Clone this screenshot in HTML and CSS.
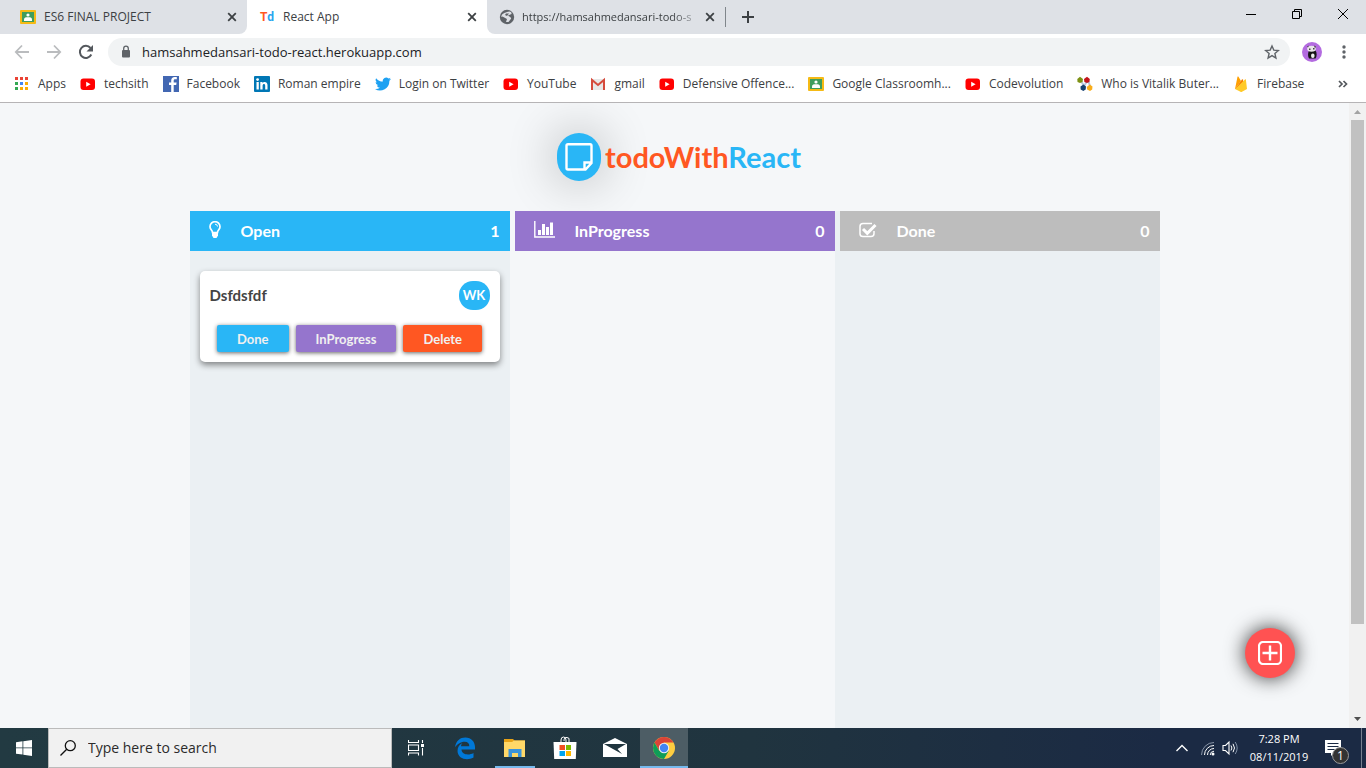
FILE: index.html
```html
<!DOCTYPE html>
<html lang="en">
<head>
<meta charset="utf-8">
<title>React App</title>
<link rel="stylesheet" href="styles.css">
</head>
<body>
<svg class="defs" aria-hidden="true">
  <symbol id="youtube" viewBox="0 0 16 16"><rect x=".5" y="2.500" width="14.500" height="11.500" rx="3" fill="#f00"/><path d="M6.200 5.800v5L10.600 8.300z" fill="#fff"/></symbol>
  <symbol id="classroom" viewBox="0 0 16 16"><rect y="1" width="16" height="14" rx="1" fill="#f5ba15"/><rect x="2" y="3" width="12" height="10" fill="#3f9d5d"/><circle cx="8" cy="6" r="1.600" fill="#fff"/><path d="M4 12v-1.500C4 8.500 6 8.300 8 8.300s4 .2 4 2.200V12z" fill="#fff"/></symbol>
  <symbol id="close" viewBox="0 0 10 10"><path d="M1.200 1.200l7.600 7.600M8.800 1.200L1.200 8.800" stroke="#3c4043" stroke-width="1.800"/></symbol>
</svg>

<header class="browser">
  <div class="tabstrip">
    <div class="tab">
      <svg class="icon"><use href="#classroom"/></svg>
      <span class="tab-title">ES6 FINAL PROJECT</span>
      <button class="tab-close" aria-label="Close tab"><svg><use href="#close"/></svg></button>
    </div>
    <div class="tab tab-active">
      <span class="td-icon"><b>T</b><b>d</b></span>
      <span class="tab-title">React App</span>
      <button class="tab-close" aria-label="Close tab"><svg><use href="#close"/></svg></button>
    </div>
    <div class="tab">
      <svg class="icon" viewBox="0 0 16 16"><circle cx="8" cy="8" r="7.200" fill="#5f6368"/><path d="M8 3c3-1.500 5 0 4.500 2L9 6.500c1 1 2.500 1 3.200 3L9.500 13H7l1-3-4.500-2.500L2.300 8C2.500 5 5 4 8 3z" fill="#dee1e6"/><path d="M7 4.500h3L8 7 6 6z" fill="#5f6368"/></svg>
      <span class="tab-title tab-fade">https://hamsahmedansari-todo-s</span>
      <button class="tab-close" aria-label="Close tab"><svg><use href="#close"/></svg></button>
    </div>
    <span class="tab-rule"></span>
    <button class="new-tab" aria-label="New tab"><svg viewBox="0 0 12 12"><path d="M6 0v12M0 6h12" stroke="#3c4043" stroke-width="2"/></svg></button>
    <div class="window-controls">
      <button aria-label="Minimize"><svg viewBox="0 0 10 10"><path d="M0 5.500h10" stroke="#000"/></svg></button>
      <button aria-label="Restore"><svg viewBox="0 0 10 10"><path d="M.5 2.500h7v7h-7zM2.500 2.500v-2h7v7h-2" fill="none" stroke="#000"/></svg></button>
      <button aria-label="Close"><svg viewBox="0 0 10 10"><path d="M0 0l10 10M10 0L0 10" stroke="#000"/></svg></button>
    </div>
  </div>

  <div class="toolbar">
    <button aria-label="Back"><svg class="icon" viewBox="0 0 16 16"><path d="M15 8H2M8 1.500L1.800 8 8 14.500" fill="none" stroke="#babcbe" stroke-width="1.800"/></svg></button>
    <button aria-label="Forward"><svg class="icon" viewBox="0 0 16 16"><path d="M1 8h13M8 1.500L14.200 8 8 14.500" fill="none" stroke="#babcbe" stroke-width="1.800"/></svg></button>
    <button aria-label="Reload"><svg class="icon" viewBox="0 0 16 16"><path d="M13.300 10.500A6 6 0 1 1 12.500 4" fill="none" stroke="#54585d" stroke-width="2"/><path d="M15 1v6.500H8.500z" fill="#54585d"/></svg></button>
    <div class="omnibox">
      <svg class="lock" viewBox="0 0 10 14"><rect x="1" y="5" width="8" height="7.500" rx="1" fill="#5f6368"/><path d="M2.700 5.500V3.400a2.300 2.300 0 0 1 4.600 0v2.100" fill="none" stroke="#5f6368" stroke-width="1.300"/></svg>
      <input class="url" aria-label="Address" value="hamsahmedansari-todo-react.herokuapp.com">
      <button aria-label="Bookmark this page"><svg class="icon" viewBox="0 0 16 16"><path d="M8 2l1.800 4.100 4.600.4-3.500 3 1 4.500L8 11.600 4.100 14l1-4.500-3.500-3 4.600-.4z" fill="none" stroke="#5f6368" stroke-width="1.400"/></svg></button>
    </div>
    <button class="avatar" aria-label="Profile"><svg viewBox="0 0 20 20"><circle cx="10" cy="10" r="10" fill="#b36be0"/><path d="M7 8.500c-1.500 3-1 6.500 0 8h6.500c1.500-2 1.500-6 0-8z" fill="#151515"/><ellipse cx="10.800" cy="13.800" rx="1.800" ry="2.300" fill="#eee"/><ellipse cx="9.500" cy="6.800" rx="4.400" ry="3" fill="#e9e5ea"/><path d="M5 4.500l2-1-1 2zM12 3.500l2 1-1 2zM7 6.500h1.500V8H7zM11 6h1.500v1.500H11z" fill="#444"/></svg></button>
    <button aria-label="Menu"><svg class="icon" viewBox="0 0 16 16"><g fill="#5f6368"><circle cx="8" cy="3" r="1.700"/><circle cx="8" cy="8" r="1.700"/><circle cx="8" cy="13" r="1.700"/></g></svg></button>
  </div>

  <nav class="bookmarks" aria-label="Bookmarks">
    <a href="#"><svg class="icon" viewBox="0 0 16 16"><path d="M1 1h3v3H1zM6 1h3v3H6zM11 1h3v3h-3z" fill="#ea4335"/><path d="M1 6h3v3H1zM1 11h3v3H1z" fill="#34a853"/><path d="M6 6h3v3H6z" fill="#4285f4"/><path d="M11 6h3v3h-3zM6 11h3v3H6zM11 11h3v3h-3z" fill="#fbac05"/></svg>Apps</a>
    <a href="#"><svg class="icon"><use href="#youtube"/></svg>techsith</a>
    <a href="#"><svg class="icon" viewBox="0 0 16 16"><path d="M0 0h16v16H0z" fill="#4267b2"/><path d="M13.800 3.200h-1.600c-1.200 0-1.500.6-1.500 1.500V6.500h2.900l-.4 2.400h-2.500V16H8.200V8.900H6V6.500h2.200V4.400C8.200 2.100 9.600.9 11.700.9c1 0 1.800.1 2.100.1z" fill="#fff"/></svg>Facebook</a>
    <a href="#"><svg class="icon" viewBox="0 0 16 16"><rect width="16" height="16" rx="1" fill="#0077b5"/><path d="M2.500 6h2.300v7.500H2.500zM6.300 6h2.200v1c1-1.600 5-1.800 5 2v4.500h-2.300V9.800c0-2.600-2.600-2.300-2.600 0v3.700H6.300z" fill="#fff"/><circle cx="3.600" cy="3.600" r="1.400" fill="#fff"/></svg>Roman empire</a>
    <a href="#"><svg class="icon" viewBox="0 0 24 24"><path d="M24 4.600a10 10 0 0 1-2.800.8 5 5 0 0 0 2.100-2.700 10 10 0 0 1-3.100 1.200 4.900 4.900 0 0 0-8.400 4.500A14 14 0 0 1 1.700 3.200a4.900 4.900 0 0 0 1.500 6.500 5 5 0 0 1-2.200-.6 4.900 4.900 0 0 0 3.900 4.900 5 5 0 0 1-2.200.1 4.900 4.900 0 0 0 4.600 3.400A10 10 0 0 1 0 19.500a14 14 0 0 0 21.500-12.400c1-.7 1.800-1.600 2.500-2.500z" fill="#1da1f2"/></svg>Login on Twitter</a>
    <a href="#"><svg class="icon"><use href="#youtube"/></svg>YouTube</a>
    <a href="#"><svg class="icon" viewBox="0 0 16 16"><path d="M1 3h14v11H1z" fill="#e7e7e7"/><path d="M2 14V4l6 5 6-5v10" fill="none" stroke="#d54b3d" stroke-width="2"/></svg>gmail</a>
    <a href="#"><svg class="icon"><use href="#youtube"/></svg>Defensive Offence...</a>
    <a href="#"><svg class="icon"><use href="#classroom"/></svg>Google Classroomh...</a>
    <a href="#"><svg class="icon"><use href="#youtube"/></svg>Codevolution</a>
    <a href="#"><svg class="icon" viewBox="0 0 16 16"><path d="M4 5l3 5 4-6 2 6" stroke="#b9c7dd" stroke-width="2" fill="none"/><path d="M.3 3L3 .8 6 3 5.500 6 3 7 .5 6z" fill="#7d9114"/><path d="M7 3l3-2.200L12.800 3l-.4 3L10 7 7.400 6z" fill="#c3141b"/><path d="M3.500 10.500l3-2 2.500 2-.3 3L6.300 15 3.700 13.500z" fill="#174272"/><path d="M9.800 11l3-2.500 2.700 2-.3 3L13 15l-2.800-1.500z" fill="#f9ad1b"/></svg>Who is Vitalik Buter...</a>
    <a href="#"><svg class="icon" viewBox="0 0 16 16"><path d="M2 13L4.500.8c.2-.6.8-.5 1 0L8 5z" fill="#ffa000"/><path d="M2 13l7-9.500c.3-.4.700-.4.900 0L12 13z" fill="#f57c00"/><path d="M2 13L12 3.500c.4-.4.800-.3.900.2L14 13l-5 2.800c-.6.300-1 .3-1.500 0z" fill="#ffca28"/></svg>Firebase</a>
    <button class="more" aria-label="More bookmarks"><svg viewBox="0 0 10 8"><path d="M1 1l3 3-3 3M5.500 1l3 3-3 3" fill="none" stroke="#54585d" stroke-width="1.700"/></svg></button>
  </nav>
</header>

<div class="viewport">
  <main class="app">
    <h1 class="brand">
      <span class="brand-mark"><svg viewBox="0 0 28 28"><path d="M3 1.200h22q1.500 0 1.500 1.500V20l-6 6.500H3q-1.500 0-1.500-1.500V2.700q0-1.500 1.500-1.500zM26 19.500h-6.500V26" fill="none" stroke="#fff" stroke-width="2.400"/></svg></span>
      <span class="brand-name"><span class="orange">todoWith</span><span class="blue">React</span></span>
    </h1>
    <div class="board">
      <section class="column tinted">
        <h2 class="column-head open"><svg class="bulb" viewBox="0 0 12 18"><path d="M3.500 11.500C3.500 9.500 1 8.500 1 5.700a5 5 0 0 1 10 0c0 2.800-2.500 3.800-2.500 5.800z" fill="none" stroke="#fff" stroke-width="1.700"/><path d="M6 3.200q2.300 0 2.500 2.300" fill="none" stroke="#fff"/><path d="M3 11h6v3.500L7.500 17h-3L3 14.500z" fill="#fff"/></svg><span>Open</span><span class="count">1</span></h2>
        <article class="card">
          <div class="card-top"><h3>Dsfdsfdf</h3><span class="badge">WK</span></div>
          <div class="actions"><button class="open">Done</button><button class="progress">InProgress</button><button class="delete">Delete</button></div>
        </article>
      </section>
      <section class="column wide">
        <h2 class="column-head progress"><svg class="chart" viewBox="0 0 21 17"><path d="M.8 0v16h20.200" fill="none" stroke="#fff" stroke-width="1.400"/><path d="M4 9h3v5H4zM8 3h3v11H8zM12 6h3v8h-3zM16 1.500h3V14h-3z" fill="#fff"/></svg><span>InProgress</span><span class="count">0</span></h2>
      </section>
      <section class="column wide tinted">
        <h2 class="column-head done"><svg class="check" viewBox="0 0 18 16"><path d="M13 1.500H4Q1 1.500 1 4.500v7.200q0 2.800 3 2.800h8q3 0 3-3V9" fill="none" stroke="#fff" stroke-width="1.500"/><path d="M4 7l4.300 4.300L16.500 3" fill="none" stroke="#fff" stroke-width="3"/></svg><span>Done</span><span class="count">0</span></h2>
      </section>
    </div>
    <button class="fab" aria-label="Add todo"><svg viewBox="0 0 24 24"><rect x="1" y="1" width="22" height="22" rx="4" fill="none" stroke="#fff" stroke-width="2.200"/><path d="M12 4.500v15M4.500 12h15" stroke="#fff" stroke-width="2.400"/></svg></button>
  </main>
  <div class="scrollbar" aria-hidden="true">
    <svg viewBox="0 0 17 17"><path d="M5 11l3.500-4L12 11z" fill="#a3a3a3"/></svg>
    <div class="scroll-track"><div class="scroll-thumb"></div></div>
    <svg viewBox="0 0 17 17"><path d="M5 6l3.500 4L12 6z" fill="#505050"/></svg>
  </div>
</div>

<footer class="taskbar">
  <button class="task start" aria-label="Start"><svg class="win" viewBox="0 0 16 16"><path d="M0 2.200l6.500-.9v6.200H0zM7.300 1.200L16 0v7.500H7.300zM0 8.300h6.500v6.300L0 13.800zM7.300 8.300H16V16l-8.700-1.300z" fill="#fff"/></svg></button>
  <label class="search"><svg class="icon" viewBox="0 0 16 16"><circle cx="10.300" cy="5.700" r="5" fill="none" stroke="#111" stroke-width="1.300"/><path d="M6.700 9.300L.5 15.500" stroke="#111" stroke-width="1.300"/></svg><input aria-label="Search" placeholder="Type here to search"></label>
  <button class="task view" aria-label="Task view"><svg class="icon" viewBox="0 0 16 16"><path d="M.5 0v2.500h10V0M.5 15.500V13h10v2.500M.5 5h10v5.500H.5zM14.500 0v3M14.500 8v7.500" fill="none" stroke="#fff" stroke-width="1.100"/><path d="M13 4h3v3h-3z" fill="#fff"/></svg></button>
  <button class="task" aria-label="Edge"><svg class="app-icon" viewBox="0 0 24 24"><path d="M2 11.200C3 4.700 7.200 1.500 12.300 1.500 18.500 1.500 22 6 22 11v2.600H8.500c.2 5.500 7.800 6 12 3.400v4.600C14 25 4.800 23 4.500 15c0-4 2-6.500 5-8-1 1-1.400 2.200-1.500 3.300h8.300c0-3-1.500-4.500-4.500-4.500C7.500 5.800 4 8.500 2 11.200z" fill="#0078d7"/></svg></button>
  <button class="task running" aria-label="File Explorer"><svg class="app-icon" viewBox="0 0 24 24"><path d="M1 3h9l1.500 1.500H22V21H1z" fill="#e8a317"/><path d="M1 6h8l2-1.500h11V21H1z" fill="#ffd868"/><path d="M5.500 13h13v8H15v-4H9v4H5.500z" fill="#3b94dc"/></svg></button>
  <button class="task" aria-label="Store"><svg class="app-icon" viewBox="0 0 24 24"><path d="M8 7V4q0-3 2.500-3T13 4v2M11 5q0-4 3-3.500T16 4v3" fill="none" stroke="#fff"/><path d="M.5 6h23L22.800 23H1.200z" fill="#fff"/><path d="M6.500 9H12v5H6.500z" fill="#f25022"/><path d="M13 9h5v5h-5z" fill="#7fba00"/><path d="M6.500 15H12v5H6.500z" fill="#00a4ef"/><path d="M13 15h5v5h-5z" fill="#ffb900"/></svg></button>
  <button class="task" aria-label="Mail"><svg class="app-icon" viewBox="0 0 24 24"><path d="M0 8l12-6 12 6v13H0z" fill="#fff"/><path d="M1 8h22l-8.500 5L19 18z" fill="#20353e"/></svg></button>
  <button class="task current" aria-label="Chrome"><svg class="app-icon" viewBox="0 0 24 24"><circle cx="12" cy="12" r="11" fill="#ffcd40"/><path d="M2.500 6.500A11 11 0 0 1 21.500 6.500H12L7.300 14.700z" fill="#db4437"/><path d="M2.500 6.500A11 11 0 0 0 12 23L16.800 14.700H7.200z" fill="#0f9d58"/><circle cx="12" cy="12" r="5.200" fill="#f1f1f1"/><circle cx="12" cy="12" r="4.200" fill="#4285f4"/></svg></button>
  <div class="tray">
    <svg class="chevron" viewBox="0 0 12 12"><path d="M.5 9L6 3.500 11.500 9" fill="none" stroke="#fff" stroke-width="1.400"/></svg>
    <svg class="icon" viewBox="0 0 16 16"><g fill="none" stroke="#8793a6"><path d="M1.500 15A12.500 12.500 0 0 1 14 2.500"/><path d="M4.500 15A9.500 9.500 0 0 1 14 5.500" stroke="#fff"/><path d="M7.500 15A6.500 6.500 0 0 1 14 8.500M10.200 15A4 4 0 0 1 14 11.200" stroke="#fff"/></g><circle cx="13" cy="14" r="1.500" fill="#fff"/></svg>
    <svg class="icon" viewBox="0 0 16 16"><path d="M1 5.500h2.500L7 2v12l-3.500-3.500H1z" fill="none" stroke="#fff" stroke-width="1.100"/><path d="M9 5.500q1.800 2.500 0 5M11 3.800q3 4.200 0 8.400" fill="none" stroke="#fff"/><path d="M13.200 2q4 6 0 12" fill="none" stroke="#8190a6"/></svg>
    <div class="clock"><span>7:28 PM</span><span>08/11/2019</span></div>
    <button class="notify" aria-label="Notifications"><svg viewBox="0 0 16 16"><path d="M0 0h16v13H9l-3 3v-3H0z" fill="#fff"/><path d="M2.500 3.500h11M2.500 6.500h11M2.500 9.500h7" stroke="#1b2a44"/></svg><span>1</span></button>
  </div>
</footer>
</body>
</html>
```
FILE: styles.css
```css
* { box-sizing: border-box; }

body {
  margin: 0;
  height: 100vh;
  display: flex;
  flex-direction: column;
  overflow: hidden;
  font: 12px/16px "Open Sans", "Noto Sans", sans-serif;
  color: #3c4043;
}

button, input { font: inherit; color: inherit; border: 0; padding: 0; background: none; }
button { display: flex; align-items: center; justify-content: center; }
h1, h2, h3 { margin: 0; }
svg { display: block; flex: none; }
.defs { display: none; }
.icon { width: 16px; height: 16px; flex: none; }

/* Browser chrome */
.browser { flex: none; background: #fff; border-bottom: 1px solid #b6b4b6; }
.tabstrip { display: flex; height: 34px; background: linear-gradient(90deg, #fff 500px, #dee1e6 500px); }
.tab { width: 240px; display: flex; align-items: center; gap: 8px; padding: 0 10px 0 12px; background: #dee1e6; }
.tab:first-child { width: 247px; padding-left: 20px; border-radius: 0 0 8px 0; }
.tab-active { background: #fff; }
.tab-active + .tab { border-radius: 0 0 0 8px; width: 238px; gap: 7px; }
.tab-rule { width: 1px; height: 20px; align-self: center; background: #80868b; }
.tab-title { flex: 1; white-space: nowrap; }
.tab-fade { font-size: 11px; -webkit-mask: linear-gradient(90deg, #000 85%, #0003); mask: linear-gradient(90deg, #000 85%, #0003); }
.tab-close svg { width: 10px; height: 10px; }
.td-icon { width: 16px; display: flex; justify-content: center; font: 12px/16px Roboto, sans-serif; color: #ff5722; }
.td-icon b + b { color: #29a5ee; }
.new-tab { width: 44px; }
.new-tab svg { width: 12px; height: 12px; }
.window-controls { flex: 1; display: flex; justify-content: flex-end; padding-bottom: 6px; }
.window-controls button { width: 46px; }
.window-controls svg { width: 10px; height: 10px; }

.toolbar { display: flex; align-items: center; height: 36px; padding: 0 6px; }
.toolbar > button { width: 32px; height: 32px; }
.omnibox { flex: 1; display: flex; align-items: center; gap: 11px; height: 28px; margin: 0 6px; padding: 0 10px 0 13px; border-radius: 14px; background: #f1f3f4; }
.lock { width: 10px; height: 14px; }
.url { flex: 1; font-size: 13px; color: #202124; }
.avatar svg { width: 20px; height: 20px; }

.bookmarks { display: flex; align-items: center; gap: 14px; height: 32px; padding: 0 18px 4px 14px; }
.bookmarks a { display: flex; align-items: center; gap: 8px; white-space: nowrap; color: inherit; text-decoration: none; }
.more { margin-left: auto; }
.more svg { width: 10px; height: 8px; }

/* Page */
.viewport { flex: 1; min-height: 0; display: flex; background: #f5f7f9; }
.app { flex: 1; display: flex; flex-direction: column; position: relative; font-family: Lato, sans-serif; overflow: hidden; }
.brand { display: flex; justify-content: center; align-items: center; gap: 4px; padding: 30px 0 30px 9px; font-size: 29px; line-height: 48px; }
.brand-mark { display: flex; align-items: center; justify-content: center; width: 44px; height: 48px; border-radius: 22px; background: #29b6f6; box-shadow: 0 0 50px rgba(0, 0, 0, 0.3); }
.brand-mark svg { width: 28px; height: 28px; }
.orange { color: #ff5722; }
.blue { color: #29b6f6; }

.board { flex: 1; display: flex; width: 100%; max-width: 970px; margin: 0 auto; }
.column { flex: 1 1 0; }
.wide { padding-left: 5px; }
.tinted { background: #ebf0f3; }
.column-head { display: flex; align-items: center; height: 40px; padding: 0 10px 0 19px; font-size: 16px; line-height: 24px; color: #fff; }
.open { background: #29b6f6; }
.progress { background: #9575cd; }
.done { background: #bdbdbd; }
.delete { background: #ff5722; }
.count { margin-left: auto; }
.column-head svg { margin: 0 20px 3px 0; }
.bulb { width: 12px; height: 18px; }
.chart { width: 21px; height: 17px; }
.check { width: 18px; height: 16px; }

.card { margin: 20px 10px; padding: 10px; border-radius: 5px; background: #fff; box-shadow: 0 3px 6px rgba(0, 0, 0, 0.45); }
.card-top { display: flex; align-items: flex-start; justify-content: space-between; }
.card h3 { font-size: 15px; line-height: 28px; color: #444; }
.badge { width: 31px; border-radius: 14px; background: #29b6f6; color: #fff; font-size: 13px; font-weight: 700; line-height: 29px; text-align: center; }
.actions { display: flex; justify-content: center; gap: 7px; padding-top: 15px; }
.actions button { height: 27px; padding: 0 20px; border-radius: 2px; font-size: 13px; font-weight: 700; color: #f0f0f0; box-shadow: 0 1px 4px rgba(0, 0, 0, 0.6); }

.fab { position: absolute; right: 54px; bottom: 50px; width: 50px; height: 50px; border-radius: 50%; background: #ff5252; box-shadow: 0 0 20px rgba(0, 0, 0, 0.8); }
.fab svg { width: 24px; height: 24px; }

.scrollbar { width: 17px; display: flex; flex-direction: column; background: #f1f1f1; }
.scrollbar svg { width: 17px; height: 17px; }
.scroll-track { flex: 1; padding: 0 2px; }
.scroll-thumb { height: 85.3%; background: #c1c1c1; }

/* Taskbar */
.taskbar { flex: none; display: flex; height: 40px; color: #fff; background: linear-gradient(90deg, #223a42, #20343f 55%, #1b2a44 85%); }
.task { width: 50px; height: 40px; }
.start { width: 48px; }
.view { width: 48px; }
.win { width: 16px; height: 16px; }
.app-icon { width: 24px; height: 24px; }
.running { box-shadow: inset 0 -2px #76b9ed; width: 40px; margin: 0 5px; }
.current { box-shadow: inset 0 -2px #76b9ed; background: #4d5d65; width: 48px; }
.search { flex: 0 1 344px; display: flex; align-items: center; gap: 12px; padding: 0 11px; background: #f1f1f1; border: 1px solid #bbb; color: #2b2b2b; font-size: 14px; line-height: 20px; }
.search input { flex: 1; min-width: 0; }
.search input::placeholder { color: #2b2b2b; opacity: 1; }
.tray { margin-left: auto; display: flex; align-items: center; padding-right: 4px; }
.tray > svg { margin-right: 6px; }
.chevron { width: 12px; height: 12px; }
.tray > .chevron { margin-right: 12px; }
.clock { width: 70px; display: flex; flex-direction: column; align-items: center; font-size: 11px; line-height: 18px; }
.notify { position: relative; width: 48px; height: 40px; padding-right: 10px; border-right: 1px solid #76808f; }
.notify svg { width: 16px; height: 16px; }
.notify span { position: absolute; right: 12px; bottom: 4px; width: 17px; height: 17px; border: 1px solid #9a9a9a; border-radius: 50%; background: #333; font-size: 12px; line-height: 15px; }
```
